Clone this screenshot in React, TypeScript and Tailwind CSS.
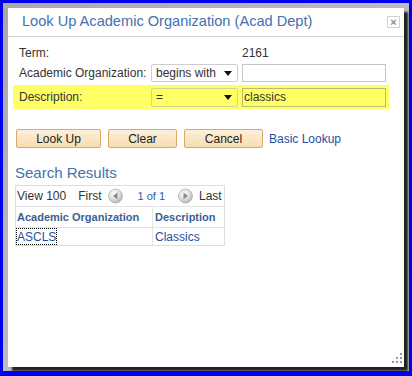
const font = "font-['Liberation_Sans',Arial,sans-serif]";

function Caret() {
  return (
    <svg width="8" height="5" viewBox="0 0 8 5" className="shrink-0">
      <path d="M0 0 L8 0 L4 5 Z" fill="#111" />
    </svg>
  );
}

function PageArrow({ dir }: { dir: "left" | "right" }) {
  return (
    <svg width="15" height="16" viewBox="0 0 15 16" className="shrink-0">
      <defs>
        <radialGradient id={`g-${dir}`} cx="40%" cy="35%" r="70%">
          <stop offset="0%" stopColor="#ffffff" />
          <stop offset="60%" stopColor="#dcdcdc" />
          <stop offset="100%" stopColor="#a8a8a8" />
        </radialGradient>
      </defs>
      <circle cx="7.5" cy="8" r="7" fill={`url(#g-${dir})`} stroke="#b4b4b4" strokeWidth="0.8" />
      {dir === "left" ? (
        <path d="M9.5 4.5 L5 8 L9.5 11.5 Z" fill="#8a8a8a" />
      ) : (
        <path d="M5.5 4.5 L10 8 L5.5 11.5 Z" fill="#8a8a8a" />
      )}
    </svg>
  );
}

function Btn({ label, width }: { label: string; width: string }) {
  return (
    <button
      className={`${width} h-[19px] rounded-[2px] border border-[#dba86c] bg-gradient-to-b from-[#fdf0dc] to-[#f8dcb0] text-[12px] leading-none text-[#222]`}
    >
      {label}
    </button>
  );
}

export default function App() {
  return (
    <div className={`w-[412px] h-[376px] bg-[#0000f6] pt-[3px] pl-[3px] ${font}`}>
      <div className="w-[406px] h-[368px] bg-gradient-to-br from-[#a9a9a9] to-[#cfcfcf] pt-[5px] pl-[5px]">
        <div className="relative w-[396px] h-[359px] bg-white shadow-[4px_4px_2px_#222]">
          {/* title bar */}
          <div className="flex h-[29px] items-center justify-between border-b border-[#cfcfcf] pl-[14px] pr-[4px]">
            <span className="text-[14.6px] text-[#4272b0]">Look Up Academic Organization (Acad Dept)</span>
            <div className="flex h-[12px] w-[13px] items-center justify-center border border-[#d2d2d2] text-[11px] font-bold leading-none text-[#8a8a8a]">
              ×
            </div>
          </div>

          {/* search criteria */}
          <div className="pl-[5px] pt-[6px] text-[12px] text-[#333]">
            <div className="flex h-[20px] items-center pl-[6px]">
              <span className="w-[132px]">Term:</span>
              <span className="ml-[91px]">2161</span>
            </div>
            <div className="flex h-[20px] items-center pl-[6px]">
              <span className="w-[132px] whitespace-nowrap">Academic Organization:</span>
              <div className="flex h-[18px] w-[87px] items-center justify-between rounded-[2px] border border-[#cdcdcd] bg-white pl-[4px] pr-[5px]">
                <span>begins with</span>
                <Caret />
              </div>
              <div className="ml-[4px] h-[18px] w-[144px] border border-[#c4c4c4] bg-white" />
            </div>
            <div className="mt-[2px] flex h-[24px] w-[376px] items-center bg-[#ffff66] pl-[6px]">
              <span className="w-[132px]">Description:</span>
              <div className="flex h-[19px] w-[87px] items-center justify-between rounded-[2px] border border-[#d6d68a] pl-[4px] pr-[5px]">
                <span>=</span>
                <Caret />
              </div>
              <div className="ml-[4px] flex h-[19px] w-[144px] items-center border border-[#bcbc6a] pl-[1px]">
                classics
              </div>
            </div>

            {/* buttons */}
            <div className="mt-[20px] flex items-center gap-[7px] pl-[3px]">
              <Btn label="Look Up" width="w-[85px]" />
              <Btn label="Clear" width="w-[69px]" />
              <Btn label="Cancel" width="w-[79px]" />
              <span className="-ml-[1px] text-[12px] text-[#1f4f9e]">Basic Lookup</span>
            </div>
          </div>

          {/* results */}
          <div className="pl-[7px]">
            <div className="mt-[16px] text-[15px] leading-[17px] text-[#4272b0]">Search Results</div>
            <div className="mt-[4px] w-[210px] border border-[#dddddd] text-[12px]">
              <div className="flex h-[20px] items-center pl-[1px] text-[#333]">
                <span>View 100</span>
                <span className="ml-[12px]">First</span>
                <span className="ml-[7px]"><PageArrow dir="left" /></span>
                <span className="ml-[14px] text-[11px] text-[#2a5aa8]">1 of 1</span>
                <span className="ml-[13px]"><PageArrow dir="right" /></span>
                <span className="ml-[6px]">Last</span>
              </div>
              <div className="flex h-[21px] items-center border-t border-[#e4e4e4] text-[11px] font-bold text-[#3b5f92]">
                <span className="w-[137px] border-r border-[#e4e4e4] pl-[1px] leading-[20px]">Academic Organization</span>
                <span className="pl-[2px]">Description</span>
              </div>
              <div className="flex h-[18px] items-center border-t border-[#e4e4e4] text-[#1f4f9e]">
                <div className="flex h-full w-[137px] items-center border-r border-[#e4e4e4]">
                  <span className="flex h-[17px] items-center border border-dotted border-black">ASCLS</span>
                </div>
                <span className="pl-[2px]">Classics</span>
              </div>
            </div>
          </div>

          {/* resize grip */}
          <svg width="12" height="12" viewBox="0 0 12 12" className="absolute bottom-[2px] right-[0px]">
            <rect x="8" y="0" width="2" height="2" fill="#9a9a9a" />
            <rect x="4" y="4" width="2" height="2" fill="#9a9a9a" />
            <rect x="8" y="4" width="2" height="2" fill="#9a9a9a" />
            <rect x="0" y="8" width="2" height="2" fill="#9a9a9a" />
            <rect x="4" y="8" width="2" height="2" fill="#9a9a9a" />
            <rect x="8" y="8" width="2" height="2" fill="#9a9a9a" />
          </svg>
        </div>
      </div>
    </div>
  );
}
